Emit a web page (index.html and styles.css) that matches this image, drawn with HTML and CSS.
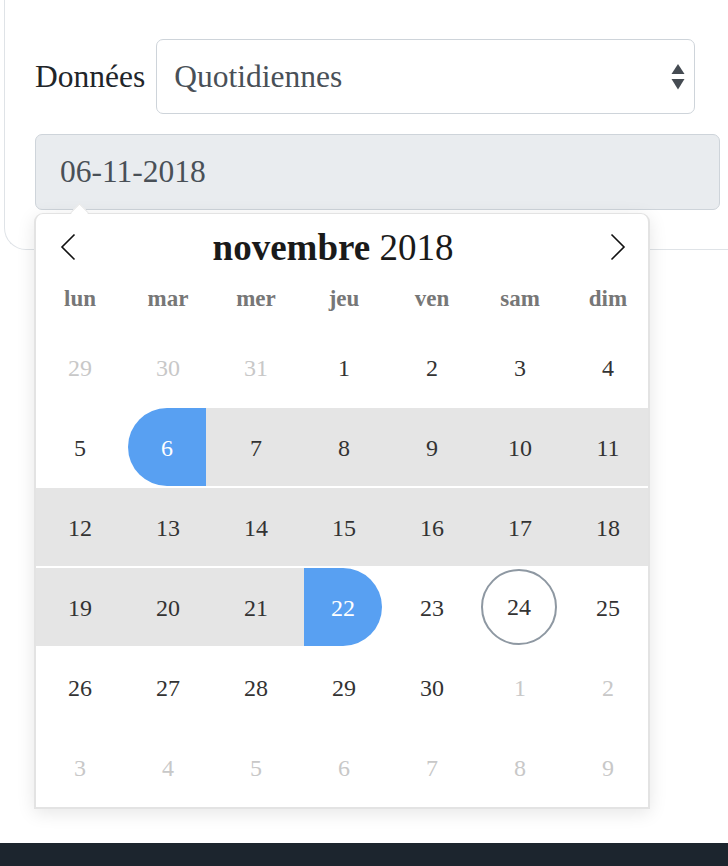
FILE: index.html
```html
<!DOCTYPE html>
<html lang="fr">
<head>
<meta charset="utf-8">
<title>Données</title>
<link rel="stylesheet" href="styles.css">
</head>
<body>
<div class="page">
  <div class="card">
    <div class="form-row">
      <label class="label">Données</label>
      <div class="select">
        <span>Quotidiennes</span>
        <svg class="arrows" width="14" height="28" viewBox="0 0 14 28"><path d="M7 1 L13.5 11 L0.5 11 Z" fill="#454b52"/><path d="M0.5 16 L13.5 16 L7 26.5 Z" fill="#454b52"/></svg>
      </div>
    </div>
    <div class="date-input">06-11-2018</div>
  </div>

  <div class="picker">
    <div class="picker-head">
      <div class="nav">
        <svg class="chev" width="16" height="28" viewBox="0 0 16 28"><path d="M14.5 1.5 L2 14 L14.5 26.5" fill="none" stroke="#111" stroke-width="1.6"/></svg>
        <div class="title"><b>novembre</b> 2018</div>
        <svg class="chev" width="16" height="28" viewBox="0 0 16 28"><path d="M1.5 1.5 L14 14 L1.5 26.5" fill="none" stroke="#111" stroke-width="1.6"/></svg>
      </div>
      <div class="weekdays">
        <span>lun</span><span>mar</span><span>mer</span><span>jeu</span><span>ven</span><span>sam</span><span>dim</span>
      </div>
    </div>
    <div class="grid">
      <div class="cell other">29</div><div class="cell other">30</div><div class="cell other">31</div><div class="cell">1</div><div class="cell">2</div><div class="cell">3</div><div class="cell">4</div>
      <div class="cell">5</div><div class="cell start"><span class="sel sel-start">6</span></div><div class="cell range">7</div><div class="cell range">8</div><div class="cell range">9</div><div class="cell range">10</div><div class="cell range">11</div>
      <div class="cell range">12</div><div class="cell range">13</div><div class="cell range">14</div><div class="cell range">15</div><div class="cell range">16</div><div class="cell range">17</div><div class="cell range">18</div>
      <div class="cell range">19</div><div class="cell range">20</div><div class="cell range">21</div><div class="cell end"><span class="sel sel-end">22</span></div><div class="cell">23</div><div class="cell"><span class="today">24</span></div><div class="cell">25</div>
      <div class="cell">26</div><div class="cell">27</div><div class="cell">28</div><div class="cell">29</div><div class="cell">30</div><div class="cell other">1</div><div class="cell other">2</div>
      <div class="cell other">3</div><div class="cell other">4</div><div class="cell other">5</div><div class="cell other">6</div><div class="cell other">7</div><div class="cell other">8</div><div class="cell other">9</div>
    </div>
  </div>

  <div class="spacer"></div>
  <footer class="footer"></footer>
</div>
</body>
</html>
```

FILE: styles.css
```css
html, body {
  margin: 0;
  padding: 0;
  background: #fff;
  overflow: hidden;
}
body {
  font-family: "Liberation Serif", "Times New Roman", serif;
  color: #212529;
  width: 728px;
  height: 866px;
}
.page {
  position: relative;
  height: 866px;
  display: flex;
  flex-direction: column;
}
.card {
  margin-left: 4px;
  width: 760px;
  box-sizing: border-box;
  border: 1px solid #dfe3e7;
  border-top: none;
  border-right: none;
  border-bottom-left-radius: 22px;
  padding: 39px 0 39px 30px;
  display: flex;
  flex-direction: column;
  gap: 20px;
}
.form-row {
  display: flex;
  align-items: center;
  gap: 11px;
}
.label {
  font-size: 31.5px;
  color: #212529;
}
.select {
  width: 539px;
  height: 75px;
  box-sizing: border-box;
  border: 1.5px solid #ced4da;
  border-radius: 7px;
  display: flex;
  align-items: center;
  justify-content: space-between;
  padding: 0 9px 0 17px;
  font-size: 31.5px;
  color: #495057;
  background: #fff;
}
.arrows {
  display: block;
}
.date-input {
  width: 685px;
  height: 76px;
  box-sizing: border-box;
  border: 1.5px solid #ced4da;
  border-radius: 7px;
  background: #e9ecef;
  color: #495057;
  font-size: 31.5px;
  display: flex;
  align-items: center;
  padding-left: 24px;
}
.picker {
  position: absolute;
  left: 34px;
  top: 213px;
  width: 616px;
  box-sizing: border-box;
  background: #fff;
  border: 2px solid #e3e3e3;
  border-top-width: 1px;
  border-radius: 9px 9px 0 0;
  box-shadow: 0 4px 18px rgba(0, 0, 0, 0.10);
}
.picker::before {
  content: "";
  position: absolute;
  left: 37px;
  top: -8px;
  width: 12px;
  height: 12px;
  background: #fff;
  border-top: 1px solid #e6e6e6;
  border-left: 1px solid #e6e6e6;
  transform: rotate(45deg);
}
.picker-head {
  padding-bottom: 10px;
  position: relative;
}
.nav {
  height: 66px;
  display: flex;
  align-items: center;
  padding: 0 22px 0 24px;
}
.chev {
  display: block;
  flex: none;
}
.title {
  flex: 1;
  text-align: center;
  font-size: 37px;
  color: #1a1a1a;
  padding-right: 20px;
}
.title b {
  font-weight: bold;
}
.weekdays {
  height: 38px;
  display: grid;
  grid-template-columns: repeat(7, 88px);
  align-items: center;
  font-size: 23px;
  font-weight: bold;
  color: #777;
  text-align: center;
}
.grid {
  width: 612px;
  overflow: hidden;
  display: grid;
  grid-template-columns: repeat(7, 88px);
  grid-auto-rows: 78px;
  row-gap: 2px;
  padding-bottom: 1px;
}
.cell {
  display: flex;
  align-items: center;
  justify-content: center;
  font-size: 24px;
  color: #333;
  padding-top: 2px;
  box-sizing: border-box;
}
.cell.other {
  color: #c8c8c8;
}
.cell.range {
  background: #e5e5e5;
}
.cell.start {
  background: linear-gradient(to right, transparent 50%, #e5e5e5 50%);
  justify-content: flex-start;
  padding-top: 0;
}
.cell.end {
  background: linear-gradient(to right, #e5e5e5 50%, transparent 50%);
  justify-content: flex-start;
  padding-top: 0;
}
.sel {
  width: 78px;
  height: 78px;
  margin-left: 4px;
  padding-top: 2px;
  box-sizing: border-box;
  background: #58a0f2;
  color: #fff;
  display: flex;
  align-items: center;
  justify-content: center;
}
.sel-start {
  border-radius: 39px 0 0 39px;
}
.sel-end {
  border-radius: 0 39px 39px 0;
}
.today {
  width: 76px;
  height: 76px;
  box-sizing: border-box;
  border: 2px solid #8e98a2;
  border-radius: 50%;
  display: flex;
  align-items: center;
  justify-content: center;
  margin-right: 2px;
  margin-top: -2px;
}
.spacer {
  flex: 1;
}
.footer {
  height: 23px;
  background: #1c252e;
}
```
